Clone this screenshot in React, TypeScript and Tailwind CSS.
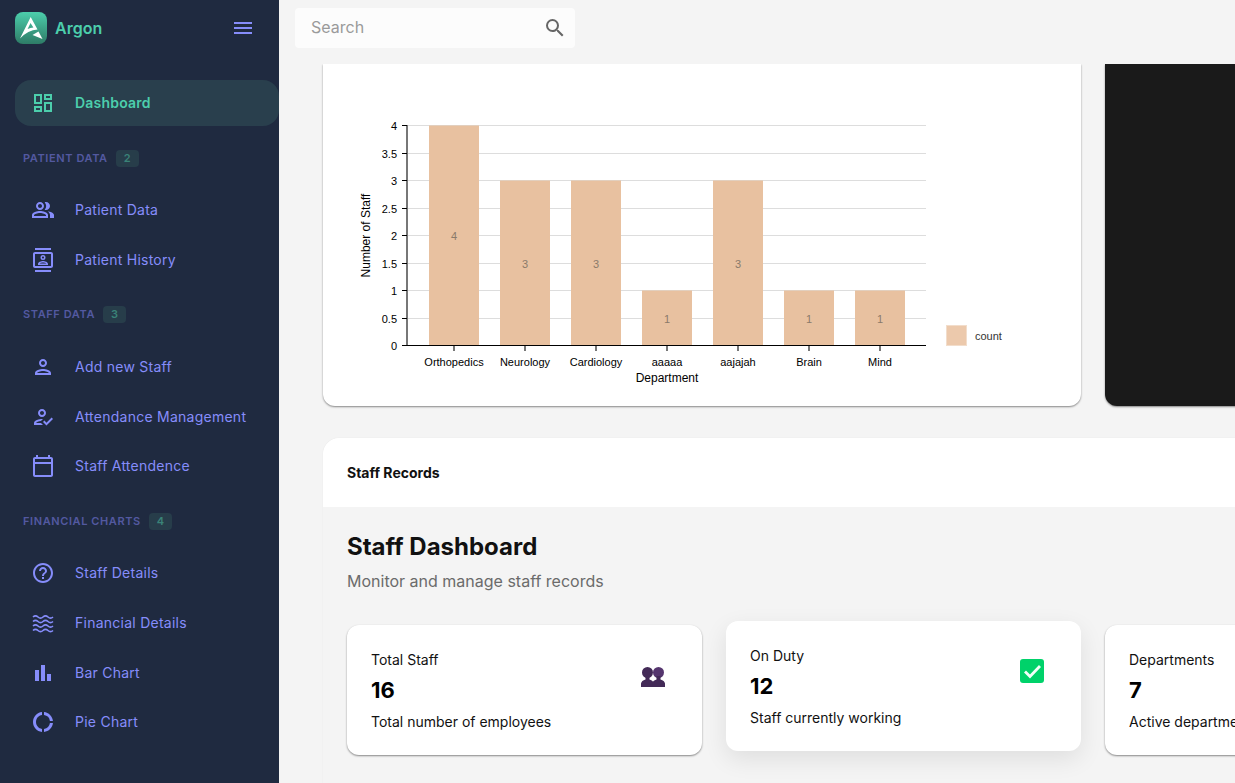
import type { ReactNode } from "react";
import {
  MdBarChart,
  MdMenu,
  MdOutlineCalendarToday,
  MdOutlineContacts,
  MdOutlineDashboard,
  MdOutlineDonutLarge,
  MdOutlineHelpOutline,
  MdOutlineHowToReg,
  MdOutlinePeopleAlt,
  MdOutlinePerson,
  MdSearch,
} from "react-icons/md";

const fontStack = "font-['Inter','Noto_Sans',sans-serif]";

const departments = [
  { name: "Orthopedics", count: 4, x: 429 },
  { name: "Neurology", count: 3, x: 500 },
  { name: "Cardiology", count: 3, x: 571 },
  { name: "aaaaa", count: 1, x: 642 },
  { name: "aajajah", count: 3, x: 713 },
  { name: "Brain", count: 1, x: 784 },
  { name: "Mind", count: 1, x: 855 },
];

const ticks = [0, 0.5, 1, 1.5, 2, 2.5, 3, 3.5, 4];

function Logo() {
  return (
    <div className="flex h-8 w-8 items-center justify-center rounded-lg bg-gradient-to-b from-[#4cceac] to-[#2e7c67]">
      <svg viewBox="0 0 32 32" className="h-8 w-8" fill="#fff">
        <path fillRule="evenodd" d="M15.7 5 L22.5 17.5 Q13 18 5 26.5 Z M15.5 11 L12.6 17 Q15.5 15.6 18.4 15.4 Z" />
        <path d="M17.5 23 L23.5 19.5 L27.5 27 Z" />
      </svg>
    </div>
  );
}

function WavesIcon() {
  const wave = "q2.5 -2.4 5 0 t5 0 t5 0 t5 0";
  return (
    <svg viewBox="0 0 24 24" className="h-6 w-6" fill="none" stroke="currentColor" strokeWidth="1.6">
      <path d={`M2 6 ${wave}`} />
      <path d={`M2 10.5 ${wave}`} />
      <path d={`M2 15 ${wave}`} />
      <path d={`M2 19.5 ${wave}`} />
    </svg>
  );
}

function NavItem({ icon, label }: { icon: ReactNode; label: string }) {
  return (
    <div className="flex h-[49.75px] items-center pl-[31px] text-[#868dfb]">
      <span className="flex w-6 justify-center text-2xl">{icon}</span>
      <span className="ml-5 text-sm tracking-[0.25px]">{label}</span>
    </div>
  );
}

function GroupLabel({ label, count, className }: { label: string; count: number; className: string }) {
  return (
    <div className={`flex h-5 items-center pl-[23px] ${className}`}>
      <span className="text-[11px] font-semibold tracking-[0.6px] text-[#5359a0]">{label}</span>
      <span className="ml-2 flex h-[17px] w-[23px] items-center justify-center rounded bg-[#273d4a] text-[11px] font-semibold text-[#3a8378]">
        {count}
      </span>
    </div>
  );
}

function Sidebar() {
  return (
    <aside className="h-full w-[279px] shrink-0 bg-[#1f2a40]">
      <div className="flex h-20 items-start justify-between pl-[15px] pr-6 pt-3">
        <div className="flex items-center gap-2">
          <Logo />
          <span className="text-base font-semibold text-[#4cceac]">Argon</span>
        </div>
        <MdMenu className="mt-1 text-2xl text-[#868dfb]" />
      </div>

      <div className="ml-[15px] flex h-[46px] items-center rounded-2xl bg-[#293f4d] pl-4 text-[#4cceac]">
        <span className="flex w-6 justify-center text-2xl">
          <MdOutlineDashboard />
        </span>
        <span className="ml-5 text-sm font-semibold tracking-[0.2px]">Dashboard</span>
      </div>

      <GroupLabel label="PATIENT DATA" count={2} className="mb-[17px] mt-[22px]" />
      <NavItem icon={<MdOutlinePeopleAlt />} label="Patient Data" />
      <NavItem icon={<MdOutlineContacts />} label="Patient History" />

      <GroupLabel label="STAFF DATA" count={3} className="mb-[18px] mt-[19.5px]" />
      <NavItem icon={<MdOutlinePerson />} label="Add new Staff" />
      <NavItem icon={<MdOutlineHowToReg />} label="Attendance Management" />
      <NavItem icon={<MdOutlineCalendarToday />} label="Staff Attendence" />

      <GroupLabel label="FINANCIAL CHARTS" count={4} className="mb-[17.25px] mt-[19.75px]" />
      <NavItem icon={<MdOutlineHelpOutline />} label="Staff Details" />
      <NavItem icon={<WavesIcon />} label="Financial Details" />
      <NavItem icon={<MdBarChart />} label="Bar Chart" />
      <NavItem icon={<MdOutlineDonutLarge />} label="Pie Chart" />
    </aside>
  );
}

function StaffChart() {
  const toY = (v: number) => Math.floor(345.5 - v * 55) + 0.5;
  return (
    <svg viewBox="323 64 758 342" className="h-[342px] w-[758px] font-['Liberation_Sans',Arial,sans-serif]">
      {ticks.slice(1).map((t) => (
        <line key={t} x1={407} x2={926} y1={toY(t)} y2={toY(t)} stroke="#dddddd" />
      ))}
      {departments.map((d) => (
        <g key={d.name}>
          <rect x={d.x} y={345.5 - d.count * 55} width={50} height={d.count * 55} fill="#e8c1a0" />
          <text x={d.x + 25} y={toY(d.count / 2) + 4} textAnchor="middle" fontSize={11} fill="#8a7a6a">
            {d.count}
          </text>
          <line x1={d.x + 25} x2={d.x + 25} y1={346} y2={351} stroke="#777777" strokeWidth={2} />
          <text x={d.x + 25} y={366} textAnchor="middle" fontSize={11} fill="#000">
            {d.name}
          </text>
        </g>
      ))}
      <line x1={407} x2={407} y1={125} y2={346} stroke="#777777" strokeWidth={2} />
      <line x1={406} x2={926} y1={345.5} y2={345.5} stroke="#000" />
      {ticks.map((t) => (
        <g key={t}>
          <line x1={402} x2={407} y1={toY(t)} y2={toY(t)} stroke="#000" />
          <text x={397} y={toY(t) + 4} textAnchor="end" fontSize={11} fill="#000">
            {t}
          </text>
        </g>
      ))}
      <text x={667} y={382} textAnchor="middle" fontSize={12} fill="#000">
        Department
      </text>
      <text transform="translate(370 235.5) rotate(-90)" textAnchor="middle" fontSize={12} fill="#000">
        Number of Staff
      </text>
      <rect x={946.5} y={325.5} width={20} height={20} fill="#ecc9ac" stroke="#f2ddcb" />
      <text x={975} y={340} fontSize={11} fill="#333333">
        count
      </text>
    </svg>
  );
}

function StatCard({
  title,
  value,
  caption,
  icon,
  raised,
}: {
  title: string;
  value: string;
  caption: string;
  icon: ReactNode;
  raised?: boolean;
}) {
  return (
    <div
      className={`flex h-[130px] w-[355px] shrink-0 items-start justify-between rounded-xl bg-white px-6 pt-[25px] ${
        raised
          ? "-translate-y-1 shadow-[0_8px_24px_rgba(0,0,0,0.09)]"
          : "shadow-[0_1px_2px_rgba(0,0,0,0.45)]"
      }`}
    >
      <div>
        <div className="text-sm leading-5 text-[#111]">{title}</div>
        <div className="mt-1.5 text-[22px] font-bold leading-7 text-black">{value}</div>
        <div className="mt-2 whitespace-nowrap text-sm leading-5 text-[#111]">{caption}</div>
      </div>
      {icon && <div className="mr-[13px] mt-[13px] h-6 w-6">{icon}</div>}
    </div>
  );
}

function PeopleIcon() {
  return (
    <svg viewBox="0 0 24 24" className="h-6 w-6">
      <circle cx="6.5" cy="9.5" r="5.5" fill="#432a57" />
      <path d="M0 24 V20.5 Q0.5 17.5 4.5 16.5 V13 H8.5 V16.5 Q12.5 17.5 12.5 20.5 V24 Z" fill="#432a57" />
      <circle cx="17.5" cy="9.5" r="5.5" fill="#55356e" />
      <path d="M11.5 24 V20.5 Q11.5 17.5 15.5 16.5 V13 H19.5 V16.5 Q23.5 17.5 24 20.5 V24 Z" fill="#432a57" />
    </svg>
  );
}

function CheckIcon() {
  return (
    <svg viewBox="0 0 24 24" className="h-6 w-6">
      <rect x="0" y="0" width="24" height="24" rx="3" fill="#00d26a" />
      <path d="M5 12.5 L10 17.5 L20 7" fill="none" stroke="#f2fff8" strokeWidth="2.8" />
    </svg>
  );
}

export default function App() {
  return (
    <div className={`flex h-[783px] w-[1235px] overflow-hidden bg-[#f4f4f4] ${fontStack}`}>
      <Sidebar />

      <div className="flex min-w-0 flex-1 flex-col">
        <div className="h-16 shrink-0 py-2 pl-4">
          <div className="flex h-10 w-[280px] items-center rounded bg-[#fcfcfc] pl-4 pr-2">
            <input
              placeholder="Search"
              className="min-w-0 flex-1 bg-transparent pb-0.5 text-base outline-none placeholder:text-[#9a9a9a]"
            />
            <MdSearch className="text-2xl text-[#666]" />
          </div>
        </div>

        <main className="min-h-0 flex-1 overflow-hidden pl-11">
          <div className="flex h-[342px] gap-6">
            <div className="w-[758px] shrink-0 rounded-b-xl bg-white shadow-[0_1px_2px_rgba(0,0,0,0.45)]">
              <StaffChart />
            </div>
            <div className="w-[400px] shrink-0 rounded-b-xl bg-[#1a1a1a] shadow-[0_1px_2px_rgba(0,0,0,0.45)]" />
          </div>

          <section className="mt-8 w-[1100px] rounded-t-2xl shadow-[0_0_1px_rgba(0,0,0,0.12)]">
            <div className="flex h-[69px] items-center rounded-t-2xl bg-white px-6 text-sm font-bold text-[#111]">
              Staff Records
            </div>
            <div className="h-[400px] bg-[#f4f4f4] px-6 pt-6">
              <h1 className="text-2xl font-bold leading-8 text-[#111]">Staff Dashboard</h1>
              <p className="mt-1.5 text-base leading-6 text-[#6b6b6b]">Monitor and manage staff records</p>
              <div className="mt-8 flex gap-6">
                <StatCard title="Total Staff" value="16" caption="Total number of employees" icon={<PeopleIcon />} />
                <StatCard title="On Duty" value="12" caption="Staff currently working" icon={<CheckIcon />} raised />
                <StatCard title="Departments" value="7" caption="Active departments" icon={null} />
              </div>
            </div>
          </section>
        </main>
      </div>
    </div>
  );
}
